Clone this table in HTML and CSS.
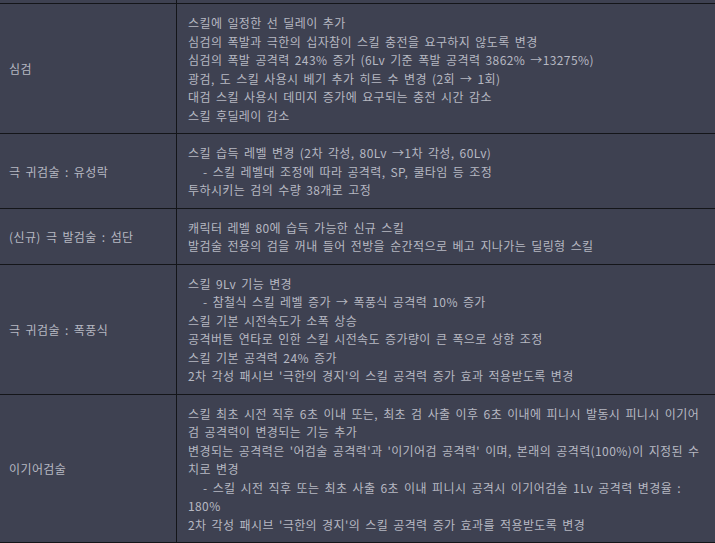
FILE: index.html
```html
<!DOCTYPE html>
<html>
  <head>
    <title>스킬 변경 사항</title>
    <link rel="stylesheet" href="styles.css">
  </head>
  <body>
    <table class="changes">
      <tr class="cut">
        <td class="name"></td>
        <td class="desc"></td>
      </tr>
      <tr>
        <td class="name">심검</td>
        <td class="desc">
          스킬에 일정한 선 딜레이 추가<br>
          심검의 폭발과 극한의 십자참이 스킬 충전을 요구하지 않도록 변경<br>
          심검의 폭발 공격력 243% 증가 (6Lv 기준 폭발 공격력 3862% →13275%)<br>
          광검, 도 스킬 사용시 베기 추가 히트 수 변경 (2회 → 1회)<br>
          대검 스킬 사용시 데미지 증가에 요구되는 충전 시간 감소<br>
          스킬 후딜레이 감소
        </td>
      </tr>
      <tr>
        <td class="name">극 귀검술 : 유성락</td>
        <td class="desc">
          스킬 습득 레벨 변경 (2차 각성, 80Lv →1차 각성, 60Lv)<br>
          <span class="sub">- 스킬 레벨대 조정에 따라 공격력, SP, 쿨타임 등 조정</span><br>
          투하시키는 검의 수량 38개로 고정
        </td>
      </tr>
      <tr>
        <td class="name">(신규) 극 발검술 : 섬단</td>
        <td class="desc">
          캐릭터 레벨 80에 습득 가능한 신규 스킬<br>
          발검술 전용의 검을 꺼내 들어 전방을 순간적으로 베고 지나가는 딜링형 스킬
        </td>
      </tr>
      <tr>
        <td class="name">극 귀검술 : 폭풍식</td>
        <td class="desc">
          스킬 9Lv 기능 변경<br>
          <span class="sub">- 참철식 스킬 레벨 증가 → 폭풍식 공격력 10% 증가</span><br>
          스킬 기본 시전속도가 소폭 상승<br>
          공격버튼 연타로 인한 스킬 시전속도 증가량이 큰 폭으로 상향 조정<br>
          스킬 기본 공격력 24% 증가<br>
          2차 각성 패시브 '극한의 경지'의 스킬 공격력 증가 효과 적용받도록 변경
        </td>
      </tr>
      <tr>
        <td class="name">이기어검술</td>
        <td class="desc">
          스킬 최초 시전 직후 6초 이내 또는, 최초 검 사출 이후 6초 이내에 피니시 발동시 피니시 이기어<br>
          검 공격력이 변경되는 기능 추가<br>
          변경되는 공격력은 '어검술 공격력'과 '이기어검 공격력' 이며, 본래의 공격력(100%)이 지정된 수<br>
          치로 변경<br>
          <span class="sub">- 스킬 시전 직후 또는 최초 사출 6초 이내 피니시 공격시 이기어검술 1Lv 공격력 변경율 :</span><br>
          180%<br>
          2차 각성 패시브 '극한의 경지'의 스킬 공격력 증가 효과를 적용받도록 변경
        </td>
      </tr>
    </table>
  </body>
</html>
```

FILE: styles.css
```css
body {
  margin: 0;
  background-color: #3e4151;
  overflow: hidden;
  font-family: "Noto Sans CJK KR", "DejaVu Sans", sans-serif;
  font-size: 12px;
  letter-spacing: 0.4px;
  word-spacing: 2px;
  color: #b6b8c2;
}

.changes {
  border-collapse: collapse;
  margin-left: -1px;
  width: 740px;
}

.changes td {
  border: 1px solid #141519;
  line-height: 18.5px;
  padding: 10px 8px 8px 9px;
}

.changes .name {
  width: 159px;
  vertical-align: middle;
}

.changes .desc {
  padding-left: 11px;
  white-space: nowrap;
}

.changes .cut td {
  height: 3px;
  padding: 0;
  border-top: none;
}

.sub {
  padding-left: 15px;
}
```
